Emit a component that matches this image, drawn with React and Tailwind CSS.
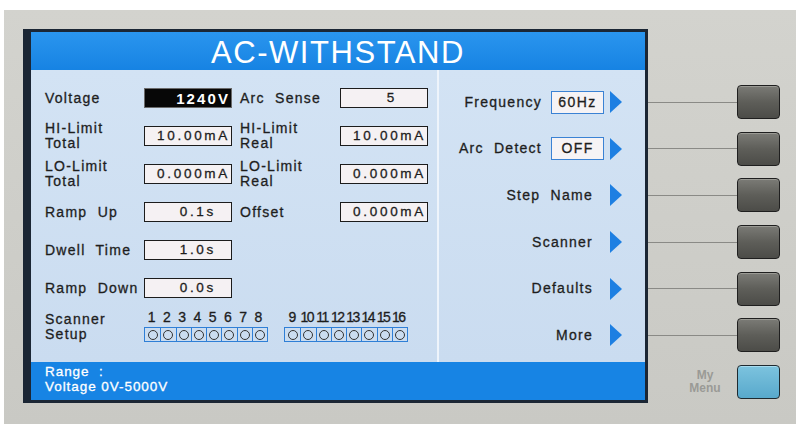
const leftRows = [
  { l1: ["Voltage"], v1: "1240V", dark: true, l2: ["Arc", "Sense"], v2: "5", v2pad: "pr-[30px]" },
  { l1: ["HI-Limit", "Total"], v1: "10.00mA", l2: ["HI-Limit", "Real"], v2: "10.00mA" },
  { l1: ["LO-Limit", "Total"], v1: "0.000mA", l2: ["LO-Limit", "Real"], v2: "0.000mA" },
  { l1: ["Ramp", "Up"], v1: "0.1s", v1pad: "pr-[15px]", l2: ["Offset"], v2: "0.000mA" },
  { l1: ["Dwell", "Time"], v1: "1.0s", v1pad: "pr-[15px]" },
  { l1: ["Ramp", "Down"], v1: "0.0s", v1pad: "pr-[15px]" },
];

const menu = [
  { label: "Frequency", value: "60Hz" },
  { label: "Arc  Detect", value: "OFF" },
  { label: "Step  Name" },
  { label: "Scanner" },
  { label: "Defaults" },
  { label: "More" },
];

const Label = ({ parts }) => {
  if (parts.length === 2 && parts[0].includes("Limit")) {
    return (
      <div className="leading-[15px]">
        <div>{parts[0]}</div>
        <div>{parts[1]}</div>
      </div>
    );
  }
  return <div className="whitespace-pre">{parts.join("  ")}</div>;
};

const ValueBox = ({ value, dark, pad = "pr-[1px]" }) => (
  <div
    className={
      "w-[88px] h-[20px] flex items-center justify-end leading-none " +
      pad +
      (dark
        ? " bg-[#070707] border-[1.5px] border-[#6a6a6a] text-white font-bold text-[15px] tracking-[0.14em] [-webkit-text-stroke:0px]"
        : " bg-[#f5f1f3] border-[1.5px] border-[#1c1c1c] text-[#1c1c1c] text-[13.5px] tracking-[0.2em]")
    }
  >
    {value}
  </div>
);

const Arrow = () => (
  <svg width="12" height="22" viewBox="0 0 12 22" className="shrink-0">
    <polygon points="0,0 12,11 0,22" fill="#1d7fe2" />
  </svg>
);

const ScannerGroup = ({ nums, tight }) => (
  <div className="flex flex-col">
    <div
      className={
        "flex h-[14px] items-end text-[14px] leading-none text-[#1c1c1c] " +
        (tight ? "tracking-[-0.1em]" : "tracking-normal")
      }
    >
      {nums.map((n) => (
        <div key={n} className="w-[15.25px] text-center">
          {n}
        </div>
      ))}
    </div>
    <div className="flex mt-[3px] border border-[#2f7fd6]">
      {nums.map((n, i) => (
        <div
          key={n}
          className={
            "w-[15.25px] h-[13px] flex items-center justify-center " +
            (i > 0 ? "border-l border-[#2f7fd6]" : "")
          }
        >
          <div className="w-[10px] h-[10px] rounded-full border-[1.5px] border-[#333]" />
        </div>
      ))}
    </div>
  </div>
);

export default function App() {
  return (
    <div className="w-[803px] h-[430px] bg-white pt-[10px] pl-[4px] font-['Liberation_Sans',Arial,sans-serif] overflow-hidden">
      <div className="w-[792px] h-[414px] bg-gradient-to-b from-[#d3d3ce] to-[#c9c9c4] flex pt-[19px] pl-[19px]">
        {/* screen */}
        <div className="w-[625px] h-[374px] border-l-[8px] border-t-[3px] border-r-[3px] border-b-[3px] border-[#1b2634] flex flex-col">
          <div className="h-[38px] bg-gradient-to-b from-[#2a95ee] to-[#1683e3] flex items-center justify-center pt-[2px] text-white text-[31px] tracking-[0.05em] leading-none">
            AC-WITHSTAND
          </div>
          <div className="h-[292px] flex bg-gradient-to-b from-[#d3e3f4] to-[#cadcf0] text-[14px] tracking-[0.09em] text-[#1e1e1e] [-webkit-text-stroke:0.3px_#1e1e1e]">
            {/* left */}
            <div className="w-[406px] pt-[9px] pl-[14px] flex flex-col">
              {leftRows.map((r, i) => (
                <div key={i} className="h-[38px] flex items-center">
                  <div className="w-[99px]">
                    <Label parts={r.l1} />
                  </div>
                  <ValueBox value={r.v1} dark={r.dark} pad={r.v1pad} />
                  {r.l2 && (
                    <>
                      <div className="w-[108px] pl-[8px]">
                        <Label parts={r.l2} />
                      </div>
                      <ValueBox value={r.v2} pad={r.v2pad} />
                    </>
                  )}
                </div>
              ))}
              <div className="h-[38px] flex items-center">
                <div className="w-[99px] leading-[15px] pt-[1px]">
                  <div>Scanner</div>
                  <div>Setup</div>
                </div>
                <ScannerGroup nums={[1, 2, 3, 4, 5, 6, 7, 8]} />
                <div className="w-[16px]" />
                <ScannerGroup nums={[9, 10, 11, 12, 13, 14, 15, 16]} tight />
              </div>
            </div>
            <div className="w-[2px] bg-[#eef4fb]" />
            {/* right */}
            <div className="flex-1 pt-[9px] pr-[23px] flex flex-col">
              {menu.map((m) => (
                <div key={m.label} className="h-[46.6px] flex items-center justify-end">
                  <div className="whitespace-pre">{m.label}</div>
                  {m.value ? (
                    <div className="ml-[9px] w-[53px] h-[23px] border-[1.5px] border-[#3b82d4] bg-[#f6f3f5] flex items-center justify-center tracking-[0.1em]">
                      {m.value}
                    </div>
                  ) : (
                    <div className="w-[11px]" />
                  )}
                  <div className="ml-[6px] flex">
                    <Arrow />
                  </div>
                </div>
              ))}
            </div>
          </div>
          <div className="flex-1 bg-[#1784e4] pl-[14px] pt-[2px] text-white text-[13.5px] tracking-[0.07em] leading-[15px] [-webkit-text-stroke:0.3px_#ffffff]">
            <div className="whitespace-pre">Range  :</div>
            <div>Voltage 0V-5000V</div>
          </div>
        </div>
        {/* side buttons */}
        <div className="flex-1 pt-[50px] pr-[16px] flex flex-col">
          {menu.map((m) => (
            <div key={m.label} className="h-[46.6px] flex items-center">
              <div className="flex-1 h-px bg-[#8a8a86]" />
              <div className="w-[43px] h-[34px] rounded-[4px] border border-[#1f1f1f] bg-gradient-to-b from-[#7b7b76] via-[#5e5e59] to-[#4c4c48] shadow-[inset_0_1px_0_#9a9a94]" />
            </div>
          ))}
          <div className="h-[46.6px] flex items-center">
            <div className="w-[40px]" />
            <div className="w-[34px] text-center text-[12px] font-bold leading-[13px] text-[#9a9a96]">
              <div>My</div>
              <div>Menu</div>
            </div>
            <div className="flex-1" />
            <div className="w-[43px] h-[34px] rounded-[4px] border border-[#1f2a30] bg-gradient-to-b from-[#7cc3de] to-[#58a9cc] shadow-[inset_0_1px_0_#a8dcef]" />
          </div>
        </div>
      </div>
    </div>
  );
}
